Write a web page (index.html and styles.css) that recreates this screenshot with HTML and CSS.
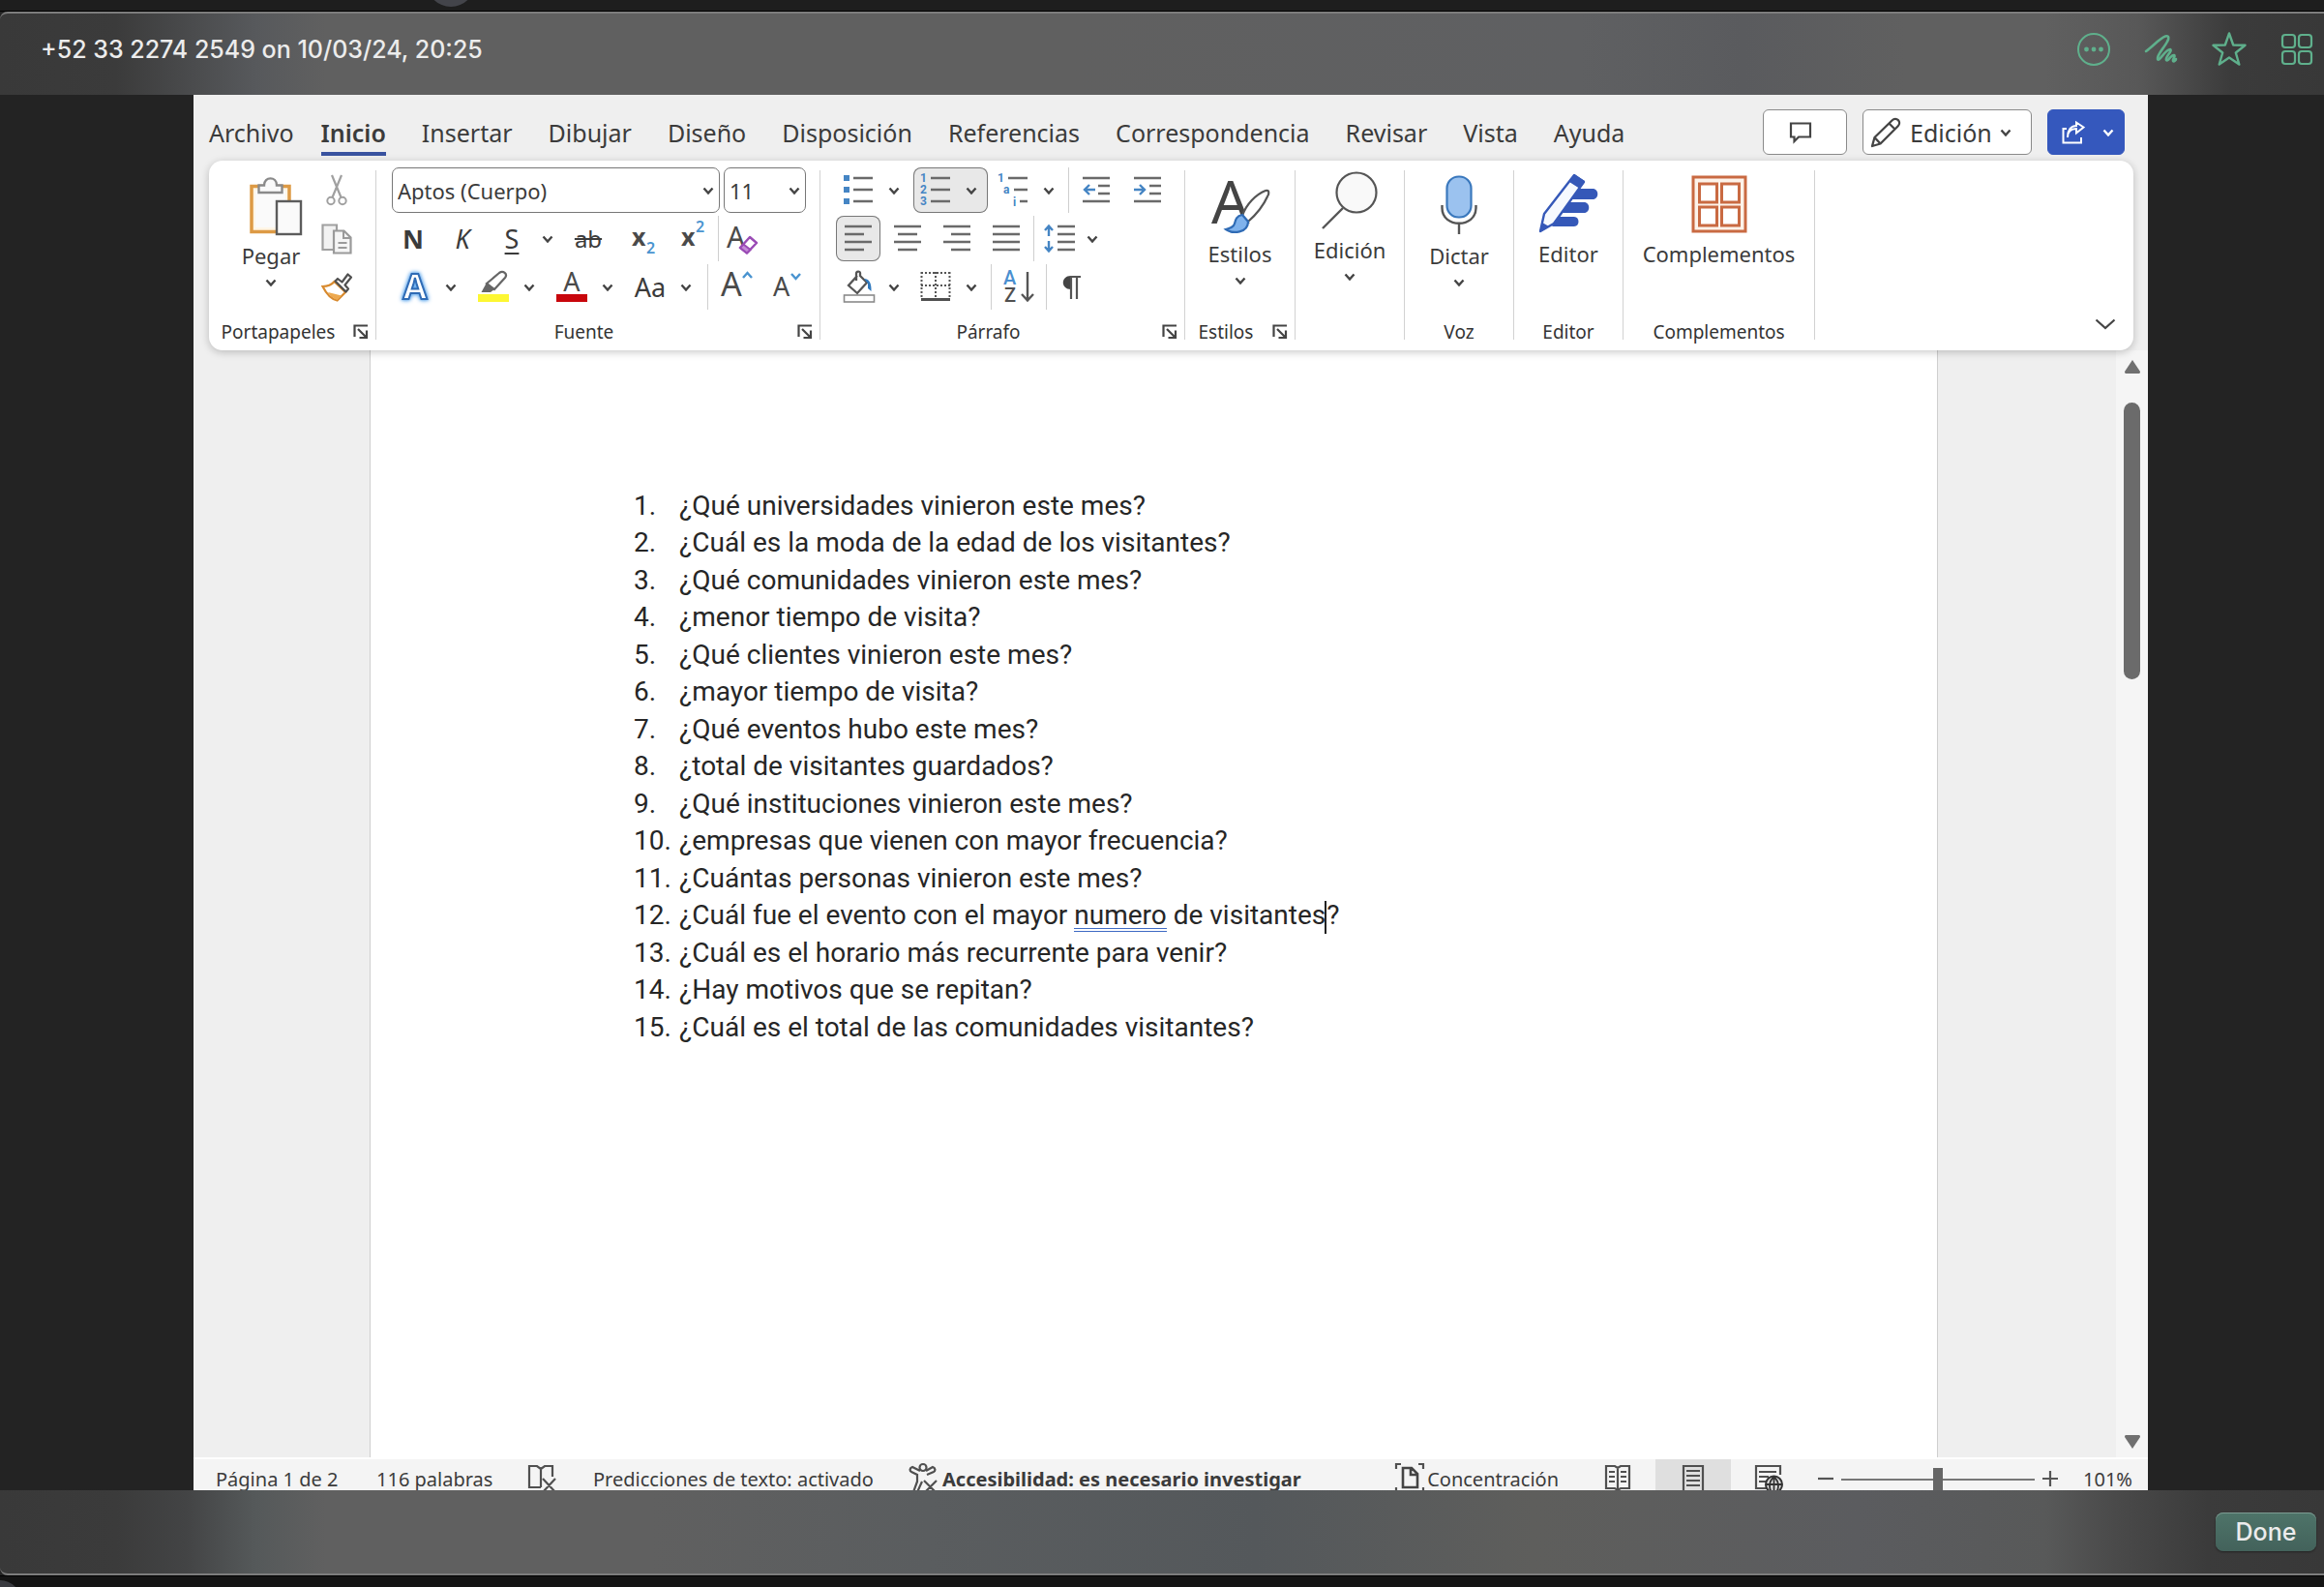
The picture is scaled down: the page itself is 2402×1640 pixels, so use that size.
FILE: index.html
```html
<!DOCTYPE html>
<html lang="es">
<head>
<meta charset="utf-8">
<title>Documento</title>
<link rel="stylesheet" href="styles.css">
</head>
<body>
<svg class="defs" aria-hidden="true">
  <symbol id="chev" viewBox="0 0 12 8"><path d="M1.5 1.5 6 6.5 10.5 1.5" fill="none" stroke="currentColor" stroke-width="2.4"/></symbol>
  <symbol id="launch" viewBox="0 0 16 16"><path d="M1.5 13V1.5H15M5 5l8 8M14 6.500V14H6.500" fill="none" stroke="#444" stroke-width="2.200"/></symbol>
</svg>

<div class="strip strip-top">
  <span class="avatar"></span>
</div>

<header class="viewer-bar">
  <h1>+52 33 2274 2549 on 10/03/24, 20:25</h1>
  <div class="viewer-actions">
    <button aria-label="Más"><svg width="36" height="36" viewBox="0 0 36 36"><circle cx="18" cy="18" r="16" fill="none" stroke="currentColor" stroke-width="2"/><g fill="currentColor"><circle cx="10.500" cy="18" r="2.400"/><circle cx="18" cy="18" r="2.400"/><circle cx="25.500" cy="18" r="2.400"/></g></svg></button>
    <button aria-label="Dibujar"><svg width="36" height="36" viewBox="0 0 36 36"><path d="M2 20C9 15 17 6 22 4.500c4-1 4 2 2 5.500-3 6-11 14-10 18 1 4 8-10 13-10 3 1-6 9-4 11 2 2 5-6 8-5 2 1-2 4-1 6 1 1 3-1 3-2" fill="none" stroke="currentColor" stroke-width="2.600" stroke-linecap="round" stroke-linejoin="round"/></svg></button>
    <button aria-label="Destacar"><svg width="36" height="36" viewBox="0 0 36 36"><path d="M18 1.500 22.200 13.500 34.500 13.800 24.800 21.500 28.300 33.500 18 26.500 7.700 33.500 11.200 21.500 1.500 13.800 13.800 13.500Z" fill="none" stroke="currentColor" stroke-width="2.400" stroke-linejoin="round"/></svg></button>
    <button aria-label="Cuadrícula"><svg width="36" height="36" viewBox="0 0 36 36"><g fill="none" stroke="currentColor" stroke-width="2.200"><rect x="3" y="3" width="13" height="13" rx="3"/><rect x="20" y="3" width="13" height="13" rx="3"/><rect x="3" y="20" width="13" height="13" rx="3"/><rect x="20" y="20" width="13" height="13" rx="3"/></g></svg></button>
  </div>
</header>

<main class="stage">
<section class="word">
  <div class="tabbar">
    <nav class="tabs">
      <a href="#" class="file">Archivo</a><a href="#" class="active">Inicio</a><a href="#">Insertar</a><a href="#">Dibujar</a><a href="#">Diseño</a><a href="#">Disposición</a><a href="#">Referencias</a><a href="#">Correspondencia</a><a href="#">Revisar</a><a href="#">Vista</a><a href="#">Ayuda</a>
    </nav>
    <div class="tab-actions">
      <button class="comment" aria-label="Comentarios"><svg width="24" height="22" viewBox="0 0 24 22"><path d="M2 1.500H22V15.500H10L5.500 20V15.500H2Z" fill="none" stroke="#444" stroke-width="2.200"/></svg></button>
      <button class="mode"><svg width="34" height="34" viewBox="0 0 34 34"><path d="M3 31 5.500 22 23.500 4.500C28 0 34 6 29.500 10.500L11.500 28.500ZM5.500 22l6 6.500M20.500 7.500l6 6" fill="none" stroke="#444" stroke-width="2.300" stroke-linejoin="round"/></svg>Edición<svg class="chev"><use href="#chev"/></svg></button>
      <button class="share" aria-label="Compartir"><svg width="24" height="24" viewBox="0 0 24 24"><path d="M5 8H1.500V22.500H20V17M6 17C6 10 10 8 15 8V12.500L22.500 6.500 15 1.500V5C9 5 6 10 6 17Z" fill="none" stroke="#fff" stroke-width="2"/></svg><svg class="chev"><use href="#chev"/></svg></button>
    </div>
  </div>

  <div class="ribbon">
    <div class="group g-clip">
      <div class="group-main clip-main">
        <button class="big tall"><span class="art"><svg width="54" height="60" viewBox="0 0 54 60"><rect x="2" y="9.500" width="39" height="47" fill="#fff6e6" stroke="#dd9a45" stroke-width="3.500"/><rect x="6" y="14" width="31" height="38" fill="#fafafa"/><path d="M9.500 16V8.500H15C15 -1 28 -1 28 8.500H33.500V16Z" fill="#fafafa" stroke="#8a8a8a" stroke-width="2.400"/><rect x="28" y="25" width="25" height="34" fill="#fafafa" stroke="#5c5c5c" stroke-width="2.400"/></svg></span>Pegar<svg class="chev"><use href="#chev"/></svg></button>
        <div class="clip-side">
          <button class="icon" aria-label="Cortar"><svg width="22" height="32" viewBox="0 0 22 32"><path d="M6 0 15.500 23M16 0 6.500 23" fill="none" stroke="#a0a0a0" stroke-width="2.200"/><g fill="#fff" stroke="#a0a0a0" stroke-width="2"><circle cx="5" cy="26.500" r="3.700"/><circle cx="17" cy="26.500" r="3.700"/></g></svg></button>
          <button class="icon" aria-label="Copiar"><svg width="32" height="32" viewBox="0 0 32 32"><path d="M1.500 1.500H16V27H1.500Z" fill="#f2f2f2" stroke="#a0a0a0" stroke-width="2.200"/><path d="M13 7.500H23.500L30.500 14.500V30.500H13Z" fill="#f5f5f5" stroke="#9a9a9a" stroke-width="2.200"/><path d="M23 7.500V15H30.500M17.500 20H26.500M17.500 25H26.500" fill="none" stroke="#9a9a9a" stroke-width="2"/></svg></button>
          <button class="icon" aria-label="Copiar formato"><svg width="32" height="30" viewBox="0 0 32 30"><path d="M1.500 14C6 14 11 12 13.500 9L25 20 16.500 28.500C10 27 5 21 1.500 14Z" fill="#fff" stroke="#d88a2e" stroke-width="2.200"/><path d="M7 20 21 23.500 16.500 28C12 26.500 9 23.500 7 20Z" fill="#eda94f"/><path d="M14.500 8.500 17 6 21.500 9.500 27.500 1.500 31 4.500 24.500 12.500 28 16.500 25.500 19.500Z" fill="#fff" stroke="#505050" stroke-width="2.200" stroke-linejoin="round"/></svg></button>
        </div>
      </div>
      <div class="group-label"><span>Portapapeles</span><button class="launcher" aria-label="Opciones de portapapeles"><svg><use href="#launch"/></svg></button></div>
    </div>
    <i class="sep"></i>

    <div class="group g-font">
      <div class="rows">
        <div class="row fields">
          <label class="field f-name"><select aria-label="Fuente"><option>Aptos (Cuerpo)</option></select><svg class="chev"><use href="#chev"/></svg></label>
          <label class="field f-size"><select aria-label="Tamaño"><option>11</option></select><svg class="chev"><use href="#chev"/></svg></label>
        </div>
        <div class="row format">
          <button class="icon"><b>N</b></button>
          <button class="icon"><em>K</em></button>
          <button class="split"><u>S</u><svg class="chev"><use href="#chev"/></svg></button>
          <button class="icon wide"><s>ab</s></button>
          <button class="icon"><svg width="44" height="47"><text x="13" y="31" class="glyph bold">x</text><text x="28" y="39" class="tiny">2</text></svg></button>
          <button class="icon"><svg width="44" height="47"><text x="13" y="31" class="glyph bold">x</text><text x="28" y="17" class="tiny">2</text></svg></button>
          <i class="rule"></i>
          <button class="icon small" aria-label="Borrar formato"><svg width="36" height="47" viewBox="0 0 36 47"><text x="1" y="33" class="glyph large">A</text><path d="M15 33 25 22 32 28 22 38.500Z" fill="#fff" stroke="#9a4bb5" stroke-width="2.400" stroke-linejoin="round"/><path d="M15 33 18.500 29.500 25.500 35 22 38.500Z" fill="#c58bd8" stroke="#9a4bb5" stroke-width="2"/></svg></button>
        </div>
        <div class="row effects">
          <button class="split"><svg class="pic" width="44" height="47" viewBox="0 0 44 47"><text x="22" y="36" class="fx">A</text></svg><svg class="chev"><use href="#chev"/></svg></button>
          <button class="split" aria-label="Resaltado"><svg class="pic" width="44" height="47" viewBox="0 0 44 47"><rect x="6" y="31" width="32" height="8" fill="#fdf733"/><path d="M15 20 28 9C32 6 37 10 34 14L23 26Z" fill="#fff" stroke="#666" stroke-width="2.200"/><path d="M15 19 23 26 19 29H9.500Z" fill="#666"/></svg><svg class="chev"><use href="#chev"/></svg></button>
          <button class="split" aria-label="Color de fuente"><svg class="pic" width="44" height="47" viewBox="0 0 44 47"><rect x="6" y="31" width="32" height="8" fill="#c8060c"/><text x="22" y="28" class="glyph mid">A</text></svg><svg class="chev"><use href="#chev"/></svg></button>
          <button class="split"><span class="case">Aa</span><svg class="chev"><use href="#chev"/></svg></button>
          <i class="rule"></i>
          <button class="icon" aria-label="Aumentar"><svg width="44" height="47" viewBox="0 0 44 47"><text x="5" y="33" class="glyph huge">A</text><path d="M28 14 32.500 9 37 14" fill="none" stroke="#4a94d0" stroke-width="2.500"/></svg></button>
          <button class="icon" aria-label="Reducir"><svg width="44" height="47" viewBox="0 0 44 47"><text x="7" y="33" class="glyph">A</text><path d="M26 10 30.500 15 35 10" fill="none" stroke="#4a94d0" stroke-width="2.500"/></svg></button>
        </div>
      </div>
      <div class="group-label"><span>Fuente</span><button class="launcher" aria-label="Opciones de fuente"><svg><use href="#launch"/></svg></button></div>
    </div>
    <i class="sep"></i>

    <div class="group g-para">
      <div class="rows">
        <div class="row lists">
          <button class="split padded" aria-label="Viñetas"><svg class="pic" width="46" height="47" viewBox="0 0 46 47"><g fill="#4585c4"><rect x="8" y="8" width="6" height="6"/><rect x="8" y="20" width="6" height="6"/><rect x="8" y="32" width="6" height="6"/></g><path d="M18 11H38M18 23H38M18 35H38" stroke="#6a6a6a" stroke-width="2.600"/></svg><svg class="chev"><use href="#chev"/></svg></button>
          <button class="split padded on" aria-label="Numeración" aria-pressed="true"><svg class="pic" width="46" height="47" viewBox="0 0 46 47"><text x="7" y="15" class="num-s">1</text><text x="7" y="27" class="num-s">2</text><text x="7" y="39" class="num-s">3</text><path d="M18 11H38M18 23H38M18 35H38" stroke="#6a6a6a" stroke-width="2.600"/></svg><svg class="chev"><use href="#chev"/></svg></button>
          <button class="split padded" aria-label="Lista multinivel"><svg class="pic" width="46" height="47" viewBox="0 0 46 47"><text x="7" y="15" class="num-s">1</text><text x="13" y="27" class="num-s">a</text><text x="23" y="40" class="num-s">i</text><path d="M18 11H38M24 23H38M30 35H38" stroke="#6a6a6a" stroke-width="2.600"/></svg><svg class="chev"><use href="#chev"/></svg></button>
          <i class="rule"></i>
          <button class="icon wide" aria-label="Disminuir sangría"><svg width="28" height="47" viewBox="0 0 28 47"><path d="M0 11H28M16 19H28M16 27H28M0 35H28" stroke="#6a6a6a" stroke-width="2.600"/><path d="M13 23H2M7 18 2 23 7 28" fill="none" stroke="#4585c4" stroke-width="2.400"/></svg></button>
          <button class="icon wide" aria-label="Aumentar sangría"><svg width="28" height="47" viewBox="0 0 28 47"><path d="M0 11H28M16 19H28M16 27H28M0 35H28" stroke="#6a6a6a" stroke-width="2.600"/><path d="M0 23H11M6 18 11 23 6 28" fill="none" stroke="#4585c4" stroke-width="2.400"/></svg></button>
        </div>
        <div class="row aligns">
          <button class="icon on" aria-label="Izquierda" aria-pressed="true"><svg width="28" height="47" viewBox="0 0 28 47"><path d="M0 11H28M0 19H20M0 27H28M0 35H20" stroke="#6a6a6a" stroke-width="2.600"/></svg></button>
          <button class="icon" aria-label="Centrar"><svg width="28" height="47" viewBox="0 0 28 47"><path d="M0 11H28M4 19H24M0 27H28M4 35H24" stroke="#6a6a6a" stroke-width="2.600"/></svg></button>
          <button class="icon" aria-label="Derecha"><svg width="28" height="47" viewBox="0 0 28 47"><path d="M0 11H28M8 19H28M0 27H28M8 35H28" stroke="#6a6a6a" stroke-width="2.600"/></svg></button>
          <button class="icon" aria-label="Justificar"><svg width="28" height="47" viewBox="0 0 28 47"><path d="M0 11H28M0 19H28M0 27H28M0 35H28" stroke="#6a6a6a" stroke-width="2.600"/></svg></button>
          <i class="rule"></i>
          <button class="spacing" aria-label="Interlineado"><svg width="32" height="47" viewBox="0 0 32 47"><path d="M14 11H32M14 19H32M14 27H32M14 35H32" stroke="#6a6a6a" stroke-width="2.600"/><path d="M5 21V11M1 15 5 10.500 9 15M5 26V36M1 32 5 36.500 9 32" fill="none" stroke="#4585c4" stroke-width="2.400"/></svg><svg class="chev"><use href="#chev"/></svg></button>
        </div>
        <div class="row lists">
          <button class="split padded" aria-label="Sombreado"><svg class="pic" width="46" height="47" viewBox="0 0 46 47"><rect x="8.500" y="32" width="31" height="7" fill="#fff" stroke="#8a8a8a" stroke-width="1.600"/><path d="M22 12 13 22 22 30 32 19 25 12V9C25 7 21 7 21 10V17" fill="none" stroke="#555" stroke-width="2.300"/><path d="M29 15C34 15 37 19 36.500 28L33 25V20Z" fill="#2f78bd"/></svg><svg class="chev"><use href="#chev"/></svg></button>
          <button class="split padded" aria-label="Bordes"><svg class="pic" width="46" height="47" viewBox="0 0 46 47"><path d="M8.500 8V36M23 8V36M37.500 8V36M8 9H38M8 22H38" fill="none" stroke="#555" stroke-width="2" stroke-dasharray="2 2"/><path d="M8 36.500H38" stroke="#505050" stroke-width="3"/></svg><svg class="chev"><use href="#chev"/></svg></button>
          <i class="rule"></i>
          <button class="icon wide" aria-label="Ordenar"><svg width="36" height="47" viewBox="0 0 36 47"><text x="2" y="21" class="sort blue">A</text><text x="3" y="39" class="sort">Z</text><path d="M27 8V37M21 31 27 37.500 33 31" fill="none" stroke="#555" stroke-width="2.400"/></svg></button>
          <i class="rule"></i>
          <button class="icon" aria-label="Mostrar marcas"><svg width="22" height="47" viewBox="0 0 22 47"><path d="M10 12C-1 12 -1 26 10 26Z" fill="#444"/><path d="M10 36V13H20M16 36V13" fill="none" stroke="#555" stroke-width="2.200"/></svg></button>
        </div>
      </div>
      <div class="group-label"><span>Párrafo</span><button class="launcher" aria-label="Opciones de párrafo"><svg><use href="#launch"/></svg></button></div>
    </div>
    <i class="sep"></i>

    <div class="group g-styles">
      <div class="group-main"><button class="big"><span class="art"><svg width="60" height="60" viewBox="0 0 60 60"><text x="0" y="50" class="style-a">A</text><path d="M32 42C36 30 46 20 56 16 60 15 60 19 58 22 54 31 46 41 38 48Z" fill="#fff" stroke="#555" stroke-width="2.200"/><path d="M32 41C26 42 25 46 24 50 23 54 19 55 15 56 22 61 38 60 38 48Z" fill="#7fb2ec" stroke="#2f6bb5" stroke-width="2.200"/></svg></span>Estilos<svg class="chev"><use href="#chev"/></svg></button></div>
      <div class="group-label"><span>Estilos</span><button class="launcher" aria-label="Opciones de estilos"><svg><use href="#launch"/></svg></button></div>
    </div>
    <i class="sep"></i>

    <div class="group g-std">
      <div class="group-main"><button class="big short"><span class="art"><svg width="60" height="60" viewBox="0 0 60 60"><circle cx="37" cy="22" r="20.500" fill="#f9f9f9" stroke="#555" stroke-width="2.200"/><path d="M23 38 2 59" stroke="#555" stroke-width="2.400"/></svg></span>Edición<svg class="chev"><use href="#chev"/></svg></button></div>
    </div>
    <i class="sep"></i>

    <div class="group g-std">
      <div class="group-main"><button class="big tall"><span class="art"><svg width="38" height="62" viewBox="0 0 38 62"><rect x="6.500" y="1.500" width="25" height="42" rx="12" fill="#9bc2ef" stroke="#3a78bd" stroke-width="2.200"/><path d="M1.500 31V34C1.500 55 36.500 55 36.500 34V31M19 50V61" fill="none" stroke="#555" stroke-width="2.400"/></svg></span>Dictar<svg class="chev"><use href="#chev"/></svg></button></div>
      <div class="group-label low"><span>Voz</span></div>
    </div>
    <i class="sep"></i>

    <div class="group g-std">
      <div class="group-main"><button class="big"><span class="art"><svg width="62" height="62" viewBox="0 0 62 62"><g fill="#3558b8"><path d="M41 16H56C63 16 63 27 56 27H34Z"/><path d="M31 30H47C54 30 54 41 47 41H24Z"/><path d="M21 45H37C43 45 43 55 37 55H14Z"/></g><path d="M37 2 47 9 16 52 2 60 6 42Z" fill="#f6f9fe" stroke="#3558b8" stroke-width="2.400" stroke-linejoin="round"/><path d="M37 1 48 8 43 16 32 9ZM2 61 4 51 11 55Z" fill="#3558b8"/></svg></span>Editor</button></div>
      <div class="group-label low"><span>Editor</span></div>
    </div>
    <i class="sep"></i>

    <div class="group g-addins">
      <div class="group-main"><button class="big"><span class="art"><svg width="58" height="60" viewBox="0 0 58 60"><g fill="#fff" stroke="#c96a42" stroke-width="3"><rect x="2" y="2" width="54" height="56" fill="#fdf3ea"/><rect x="8.500" y="9" width="18" height="19"/><rect x="31.500" y="9" width="18" height="19"/><rect x="8.500" y="33" width="18" height="19"/><rect x="31.500" y="33" width="18" height="19"/></g></svg></span>Complementos</button></div>
      <div class="group-label low"><span>Complementos</span></div>
    </div>
    <i class="sep"></i>
    <button class="collapse" aria-label="Contraer la cinta"><svg width="22" height="12" viewBox="0 0 22 12"><path d="M1.500 1.500 11 10 20.500 1.500" fill="none" stroke="#444" stroke-width="2.200"/></svg></button>
  </div>

  <div class="workspace">
    <article class="page">
      <ol>
        <li><span class="num">1.</span>¿Qué universidades vinieron este mes?</li>
        <li><span class="num">2.</span>¿Cuál es la moda de la edad de los visitantes?</li>
        <li><span class="num">3.</span>¿Qué comunidades vinieron este mes?</li>
        <li><span class="num">4.</span>¿menor tiempo de visita?</li>
        <li><span class="num">5.</span>¿Qué clientes vinieron este mes?</li>
        <li><span class="num">6.</span>¿mayor tiempo de visita?</li>
        <li><span class="num">7.</span>¿Qué eventos hubo este mes?</li>
        <li><span class="num">8.</span>¿total de visitantes guardados?</li>
        <li><span class="num">9.</span>¿Qué instituciones vinieron este mes?</li>
        <li><span class="num">10.</span>¿empresas que vienen con mayor frecuencia?</li>
        <li><span class="num">11.</span>¿Cuántas personas vinieron este mes?</li>
        <li><span class="num">12.</span>¿Cuál fue el evento con el mayor <span class="grammar">numero</span> de visitantes<span class="caret"></span>?</li>
        <li><span class="num">13.</span>¿Cuál es el horario más recurrente para venir?</li>
        <li><span class="num">14.</span>¿Hay motivos que se repitan?</li>
        <li><span class="num">15.</span>¿Cuál es el total de las comunidades visitantes?</li>
      </ol>
    </article>
    <div class="scrollbar">
      <svg width="18" height="16" viewBox="0 0 18 16"><path d="M9 1 17 13C17 15 16 15 15 15H3C2 15 1 15 1 13Z" fill="#707070"/></svg>
      <span class="track"><span class="thumb"></span></span>
      <svg width="18" height="16" viewBox="0 0 18 16"><path d="M9 15 17 3C17 1 16 1 15 1H3C2 1 1 1 1 3Z" fill="#707070"/></svg>
    </div>
  </div>

  <footer class="status">
    <span class="s-page">Página 1 de 2</span>
    <span class="s-words">116 palabras</span>
    <svg class="s-proof" width="30" height="32" viewBox="0 0 30 32"><path d="M14 26H2V4H10L14 7 18 4H26V15M14 7V26M16 17 29 31M29 17 16 31" fill="none" stroke="#505050" stroke-width="2.200"/></svg>
    <span class="s-pred">Predicciones de texto: activado</span>
    <button class="s-acc"><svg width="30" height="32" viewBox="0 0 30 32"><path d="M15 2a3.500 3.500 0 1 1 0 7 3.500 3.500 0 1 1 0-7ZM12 9 4 5C1 6 1 9 3 10L9 13V20L5 31M18 9 25 5C28 6 28 9 26 10L19 13M9 31 14 20M16 19 29 32M29 19 16 32" fill="none" stroke="#505050" stroke-width="2.200"/></svg><strong>Accesibilidad: es necesario investigar</strong></button>
    <button class="s-focus"><svg width="30" height="32" viewBox="0 0 30 32"><path d="M1 7V2H6M24 2H29V7M1 26V31H6M24 31H29V26" fill="none" stroke="#505050" stroke-width="2.200"/><path d="M8 6H17L23 12V26H8ZM16 6V13H23" fill="none" stroke="#444" stroke-width="2.600"/></svg>Concentración</button>
    <button class="view" aria-label="Modo de lectura"><svg width="28" height="32" viewBox="0 0 28 32"><path d="M2 4H11L14 6 17 4H26V27H17L14 29 11 27H2ZM14 6V31M5 10H11M5 15H11M5 20H11M17 10H23M17 15H23M17 20H23" fill="none" stroke="#505050" stroke-width="2.200"/></svg></button>
    <button class="view current" aria-label="Diseño de impresión" aria-pressed="true"><svg width="24" height="32" viewBox="0 0 24 32"><path d="M2 4H22V31H2ZM5 9H19M5 14H19M5 19H19M5 24H19" fill="none" stroke="#505050" stroke-width="2.200"/></svg></button>
    <button class="view" aria-label="Diseño web"><svg width="30" height="32" viewBox="0 0 30 32"><path d="M13 27H2V4H27V13M5 10H23M5 15H15M5 20H12" fill="none" stroke="#505050" stroke-width="2.200"/><circle cx="20.500" cy="23" r="8.500" fill="#dedede" stroke="#333" stroke-width="2"/><path d="M12 23H29M20.500 15V31M20.500 15C14 21 16 28 18 31M20.500 15C27 21 25 28 23 31" fill="none" stroke="#333" stroke-width="1.800"/></svg></button>
    <button class="zoom-step" aria-label="Alejar"><svg width="16" height="16" viewBox="0 0 16 16"><path d="M0 8H16" stroke="#555" stroke-width="2.200"/></svg></button>
    <input class="zoom" type="range" min="0" max="100" value="50" aria-label="Zoom">
    <button class="zoom-step" aria-label="Acercar"><svg width="16" height="16" viewBox="0 0 16 16"><path d="M0 8H16M8 0V16" stroke="#555" stroke-width="2.200"/></svg></button>
    <span class="s-zoom">101%</span>
  </footer>
</section>
</main>

<footer class="viewer-foot"><button class="done">Done</button></footer>
<div class="strip strip-bottom"><span class="dot"></span></div>
</body>
</html>
```

FILE: styles.css
```css
* { box-sizing: border-box; }

body {
  margin: 0;
  height: 100vh;
  display: flex;
  flex-direction: column;
  overflow: hidden;
  background: #232323;
  color: #3b3b3b;
  font-family: "Noto Sans", "Open Sans", sans-serif;
  font-size: 22px;
}

button {
  margin: 0;
  padding: 0;
  border: 0;
  background: none;
  color: inherit;
  font: inherit;
  display: flex;
  align-items: center;
  justify-content: center;
}

svg { display: block; flex: none; overflow: visible; }
.defs { position: absolute; width: 0; height: 0; }
.chev { width: 12px; height: 8px; color: #444; }

/* Viewer chrome */
.strip { flex: none; height: 12px; overflow: hidden; }
.strip-top { background: #1e1e1e; border-bottom: 1px solid #000; padding-left: 441px; display: flex; align-items: flex-end; }
.avatar { width: 50px; height: 50px; margin-bottom: 4px; border-radius: 50%; background: #43444a; }
.strip-bottom { background: #141414; border-top: 1px solid #000; }
.dot { display: block; width: 44px; height: 44px; margin: 4px 0 0 -22px; border-radius: 50%; background: #3a3b40; }

.viewer-bar, .viewer-foot {
  flex: none;
  display: flex;
  align-items: center;
  background: linear-gradient(90deg, #393939 0, #3b3b3b 5%, #57595c 11%, #606060 14%, #606060 46%, #5f6062 68%, #5a5b5e 75%, #606060 82%, #606060 88%, #585858 92%, #3b3b3b 96%, #383838 100%);
}
.viewer-bar {
  height: 86px;
  padding: 0 10px 10px 42px;
  justify-content: space-between;
  border-top: 2px solid #7d7d7d;
  border-top-left-radius: 8px;
}
.viewer-bar h1 { margin: 0; color: #ececec; font: 500 25px/34px Inter, sans-serif; }
.viewer-actions { display: flex; gap: 34px; color: #5fb08c; }
.viewer-actions button { width: 36px; height: 36px; }

.viewer-foot {
  height: 88px;
  padding: 0 8px 0 0;
  justify-content: flex-end;
  border-bottom: 2px solid #7d7d7d;
  border-bottom-left-radius: 8px;
  background: linear-gradient(90deg, #393939 0, #3b3b3b 5%, #434445 8%, #55595a 11%, #606060 14%, #606060 28%, #5a5d5f 40%, #54585b 54%, #5e5e5c 66%, #5b5c5f 80%, #585959 88%, #4a4a4a 91%, #3b3b3b 95%, #383838 100%);
}
.done {
  width: 104px;
  height: 40px;
  border-radius: 8px;
  background: linear-gradient(#4e7469, #43625b);
  box-shadow: inset 0 1px 0 #7d9b92, 0 1px 2px #222;
  color: #ececec;
  font: 500 25px/34px Inter, sans-serif;
}

.stage { flex: 1; min-height: 0; display: flex; padding: 0 182px 0 200px; }

/* Word window */
.word { flex: 1; min-width: 0; display: flex; flex-direction: column; background: #efefef; }

.tabbar { display: flex; justify-content: space-between; padding: 15px 24px 5px 16px; }
.tabs { display: flex; gap: 37px; }
.tabs a {
  padding: 7px 0 3px;
  border-bottom: 4px solid transparent;
  color: #3b3b3b;
  font-size: 25px;
  line-height: 34px;
  text-decoration: none;
}
.tabs .file { margin-right: -9px; }
.tabs .active { border-color: #3953a0; font-weight: 600; }
.tab-actions { display: flex; gap: 16px; }
.tab-actions button { height: 47px; border: 1px solid #8a8a8a; border-radius: 6px; background: #fff; }
.tab-actions .comment { width: 87px; padding-right: 9px; }
.tab-actions .mode { width: 175px; padding-left: 6px; gap: 8px; justify-content: flex-start; font-size: 25px; }
.tab-actions .share { width: 80px; padding-left: 4px; gap: 18px; border-color: #3558bd; background: #3558bd; }
.share .chev { color: #fff; }

/* Ribbon */
.ribbon {
  position: relative;
  display: flex;
  height: 196px;
  margin: 0 15px 0 16px;
  border-radius: 14px;
  background: #fff;
  box-shadow: 0 2px 8px rgba(0, 0, 0, .22);
}
.sep { flex: none; width: 1px; margin: 10px 0 11px; background: #d2d2d2; }
.rule { flex: none; width: 1px; height: 47px; background: #cfcfcf; }
.group { flex: none; display: flex; flex-direction: column; padding: 7px 0 4px; }
.g-clip { width: 172px; }
.g-font { width: 458px; }
.g-para { width: 376px; }
.g-styles { width: 113px; }
.g-std { width: 112px; }
.g-addins { width: 197px; }

.group-main { display: flex; justify-content: center; align-items: flex-start; }
.clip-main { justify-content: flex-start; padding-left: 16px; }
.clip-side { display: flex; flex-direction: column; gap: 3px; }
.clip-side .icon { width: 40px; }

.big { flex-direction: column; width: 96px; color: #3b3b3b; line-height: 30px; }
.art { display: flex; align-items: flex-end; height: 68px; margin-bottom: 6px; }
.short .art { height: 64px; }
.tall .art { height: 70px; }
.clip-main .art { padding-left: 10px; }
.big .chev { margin-top: 9px; }

.rows { display: flex; flex-direction: column; gap: 3px; }
.g-font .rows { padding-left: 16px; }
.g-para .rows { padding-left: 16px; }
.row { display: flex; height: 47px; }
.fields { gap: 4px; }
.format { gap: 7px; }
.effects { gap: 12px; padding-left: 2px; }
.effects .icon { margin-left: -4px; }
.lists { gap: 3px; }
.aligns { gap: 5px; }

.icon { width: 44px; height: 47px; }
.icon.wide { width: 50px; }
.icon.small { width: 36px; }
.g-para .icon { width: 46px; }
.g-para .icon.wide { width: 50px; }
.split { justify-content: flex-start; height: 47px; gap: 9px; padding-right: 4px; }
.split > :first-child { width: 44px; }
.g-para .split > :first-child { width: 46px; }
.g-para .split { width: 77px; gap: 8px; padding: 0; }
.spacing { gap: 12px; padding-left: 5px; }
.on { border-radius: 8px; background: #e8e8e8; box-shadow: inset 0 0 0 1px #777; }

.row b, .row em, .row u { font-size: 27px; line-height: 36px; }
.row u { text-decoration-thickness: 2px; text-underline-offset: 4px; }
.row s { font-size: 24px; text-decoration-thickness: 2px; }
.row .case { font-size: 27px; }

.glyph { fill: #4a4a4a; font-size: 27px; }
.glyph.bold { font-weight: 700; font-size: 25px; }
.glyph.large { font-size: 30px; }
.glyph.huge { font-size: 34px; }
.glyph.mid { text-anchor: middle; }
.tiny { fill: #4a94d0; font-size: 16px; font-weight: 600; }
.num-s { fill: #4585c4; font: 700 12px Roboto, sans-serif; }
.sort { fill: #505050; font: 500 20px/20px Roboto, sans-serif; }
.sort.blue { fill: #4a8fd0; }
.fx { fill: #fff; stroke: #2f6bb5; stroke-width: 2px; font-size: 36px; font-weight: 700; text-anchor: middle; filter: drop-shadow(0 0 2px #6fb0ee) drop-shadow(0 0 1px #6fb0ee); }
.style-a { fill: #444; font-size: 62px; }

.field { display: grid; align-items: center; }
.field > * { grid-area: 1 / 1; }
.field .chev { justify-self: end; margin-right: 6px; pointer-events: none; }
.f-name { width: 339px; }
.f-size { width: 85px; }
.field select {
  width: 100%;
  height: 47px;
  padding: 0 24px 0 5px;
  border: 1px solid #777;
  border-radius: 7px;
  background: #fff;
  color: #3b3b3b;
  font: inherit;
  appearance: none;
}

.group-label { display: flex; align-items: center; height: 30px; margin-top: auto; padding-right: 7px; color: #333; font-size: 19px; line-height: 30px; }
.group-label span { flex: 1; text-align: center; }
.group-label.low { padding: 0; }
.launcher { width: 16px; height: 16px; margin-left: 6px; }
.launcher svg { width: 16px; height: 16px; }
.collapse { align-self: flex-end; margin: 0 18px 21px auto; }

/* Document */
.workspace { flex: 1; min-height: 0; display: grid; grid-template-columns: 182fr 1621fr 184fr 33px; }
.page { grid-column: 2; padding: 142px 0 0 272px; border: solid #cfcfcf; border-width: 0 1px; background: #fff; color: #262626; }
.page ol { margin: 0; padding: 0; list-style: none; font: 28px/38px Roboto, sans-serif; }
.page li { display: flow-root; }
.page li:nth-child(even) { margin-bottom: 1px; }
.num { display: inline-block; width: 47px; white-space: nowrap; }
.grammar { border-bottom: 4px double #3f6ac4; line-height: 26px; display: inline-block; }
.caret { display: inline-block; width: 2px; height: 34px; margin: -4px 0 -4px -1px; vertical-align: middle; background: #222; }

.scrollbar { grid-column: 4; display: flex; flex-direction: column; align-items: center; padding: 9px 0 8px; background: #f5f5f5; }
.track { flex: 1; padding: 29px 0; }
.thumb { display: block; width: 17px; height: 286px; border-radius: 9px; background: #6b6b6b; }

/* Status bar */
.status {
  flex: none;
  display: flex;
  align-items: flex-start;
  height: 34px;
  padding: 0 16px 0 23px;
  overflow: hidden;
  border-top: 2px solid #fff;
  background: #f4f4f4;
  font-size: 20px;
  line-height: 42px;
}
.status > * { flex: none; }
.status svg { margin-top: 3px; }
.status button { height: 32px; line-height: 42px; }
.status button, .status span { white-space: nowrap; }
.s-page { width: 166px; }
.s-words { width: 156px; }
.status .s-proof { margin-right: 38px; }
.s-pred { width: 326px; }
.status .s-acc { gap: 5px; align-items: flex-start; margin-right: auto; }
.status .s-focus { gap: 3px; align-items: flex-start; margin-right: 22px; }
.status .view { width: 78px; align-items: flex-start; }
.status .current { background: #dfdfdf; }
.status .zoom-step { width: 16px; }
.status .zoom-step svg { margin-top: 7px; }
.view + .zoom-step { margin-left: 12px; }
.zoom {
  width: 200px;
  height: 32px;
  margin: 5px 8px 0;
  appearance: none;
  background: linear-gradient(#777, #777) center / 100% 2px no-repeat;
}
.zoom::-webkit-slider-thumb { appearance: none; width: 10px; height: 24px; background: #666; }
.s-zoom { margin-left: 26px; }
```
